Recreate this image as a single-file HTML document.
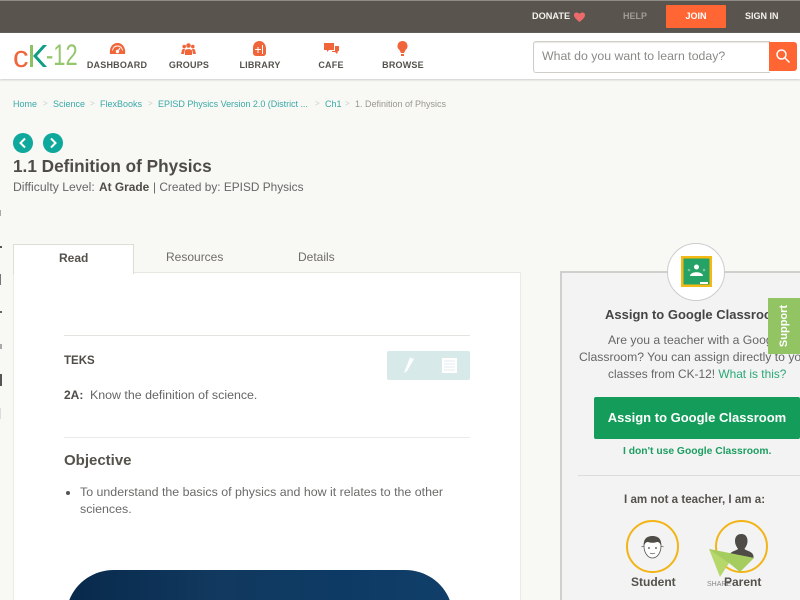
<!DOCTYPE html>
<html><head><meta charset="utf-8"><style>
html,body{margin:0;padding:0;width:800px;height:600px;overflow:hidden;background:#f8f8f4;font-family:"Liberation Sans",sans-serif;color:#555}
#w{position:relative;width:800px;height:600px;overflow:hidden;background:#f8f8f4}
.a{position:absolute;white-space:nowrap}
svg{position:absolute;overflow:visible}
.nav{font-size:9px;font-weight:bold;color:#55524c;letter-spacing:.2px;top:60px;text-align:center;width:80px}
.bc{font-size:9px;top:99px;color:#3aa9a8}
.sep{font-size:8px;top:99px;color:#ccc}
</style></head><body><div id="w">
<div class="a" style="left:0;top:0;width:800px;height:33px;background:#59554e;border-top:1px solid #8f8c86;box-sizing:border-box"></div>
<div class="a" style="left:0;top:33px;width:800px;height:46px;background:#fff;box-shadow:0 1px 2px #ccc"></div>

<div class="a" style="left:532px;top:11px;font-size:9.200px;font-weight:bold;color:#f4f2ee">DONATE</div>
<svg style="left:574px;top:12px" width="11" height="10" viewBox="0 0 11 10"><path d="M5.500 10C2 7 0 5.500 0 3 0 .5 3.500-.5 5.500 2 7.500-.5 11 .5 11 3c0 2.500-2 4-5.500 7z" fill="#ee6a6a"/></svg>
<div class="a" style="left:623px;top:11px;font-size:9px;font-weight:bold;color:#a09c94">HELP</div>
<div class="a" style="left:666px;top:5px;width:60px;height:23px;background:#ff6633;color:#fff;font-size:9px;font-weight:bold;text-align:center;line-height:23px;border-radius:1px">JOIN</div>
<div class="a" style="left:745px;top:11px;font-size:9px;font-weight:bold;color:#f4f2ee">SIGN IN</div>

<div class="a" style="left:13px;top:39px;font-size:31px;line-height:36px;color:#f0663a">c</div>
<svg style="left:28px;top:45px" width="20" height="23" viewBox="0 0 20 23"><path d="M2 0h3v22H2z" fill="#8cc265"/><path d="M15 0h4L9 11l10 11h-4L5 11z" fill="#0f9d85"/></svg>
<div class="a" style="left:46px;top:40px;font-size:30px;line-height:32px;color:#93c66d;transform-origin:0 50%;transform:scaleX(.73)">-12</div>

<svg style="left:110px;top:43px" width="15" height="11" viewBox="0 0 15 11"><path d="M0 11C-1 4 3 0 7.500 0S16 4 15 11z" fill="#f0663a"/><circle cx="7.500" cy="8.500" r="1.700" fill="#fff"/><path d="M2.500 7.500C3 4.500 5 3 7.500 3S12 4.500 12.500 7.500" stroke="#fff" fill="none" stroke-width=".9"/><path d="M8 8l2-3" stroke="#fff" stroke-width="1"/></svg>
<div class="a nav" style="left:77px">DASHBOARD</div>
<svg style="left:181px;top:43px" width="15" height="12" viewBox="0 0 15 12" fill="#f0663a"><circle cx="7.500" cy="2.500" r="2.300"/><circle cx="3.200" cy="3.500" r="1.800"/><circle cx="11.800" cy="3.500" r="1.800"/><path d="M4 12V8C4 5.500 11 5.500 11 8v4zM0 11l1-4c.5-1.500 2.500-1.500 3-1l-1 5zM15 11l-1-4c-.5-1.500-2.500-1.500-3-1l1 5z"/></svg>
<div class="a nav" style="left:149px">GROUPS</div>
<svg style="left:253px;top:41px" width="13" height="15" viewBox="0 0 13 15"><path d="M6.500 0C10.500 0 13 3.500 13 8v4c0 2-1.500 3-3 3H3c-1.500 0-3-1-3-3V7C0 3 2.500 0 6.500 0z" fill="#f0663a"/><path d="M2 8.500h6M5 6v6M9.500 4v9" stroke="#fff" stroke-width="1" fill="none"/></svg>
<div class="a nav" style="left:220px">LIBRARY</div>
<svg style="left:324px;top:43px" width="15" height="12" viewBox="0 0 15 12" fill="#f0663a"><path d="M0 0h10v7H5L3 9V7H0z"/><path d="M11 3h4v5h-1l-1 3-2-2H8V8h3z"/></svg>
<div class="a nav" style="left:291px">CAFE</div>
<svg style="left:397px;top:41px" width="11" height="15" viewBox="0 0 11 15" fill="#f0663a"><path d="M5.500 0a5 5 0 0 1 3 9L7 12H4L2.500 9a5 5 0 0 1 3-9z"/><path d="M4 13h3v2H4z"/></svg>
<div class="a nav" style="left:363px">BROWSE</div>

<div class="a" style="left:533px;top:41px;width:236px;height:30px;background:#fff;border:1px solid #cfcdc6;border-right:0;border-radius:3px 0 0 3px;box-shadow:inset 0 1px 1px #e8e8e4"></div>
<div class="a" style="left:542px;top:49px;font-size:12.300px;color:#8a8a86">What do you want to learn today?</div>
<div class="a" style="left:769px;top:42px;width:28px;height:29px;background:#ff6633;border-radius:0 3px 3px 0"></div>
<svg style="left:776px;top:49px" width="14" height="14" viewBox="0 0 14 14" fill="none" stroke="#fff" stroke-width="1.500"><circle cx="5.500" cy="5.500" r="4.500"/><path d="M9 9l4.500 4.500"/></svg>

<div class="a bc" style="left:13px">Home</div><div class="a sep" style="left:43px">&gt;</div>
<div class="a bc" style="left:53px">Science</div><div class="a sep" style="left:90px">&gt;</div>
<div class="a bc" style="left:100px">FlexBooks</div><div class="a sep" style="left:148px">&gt;</div>
<div class="a bc" style="left:158px;letter-spacing:-.03px">EPISD Physics Version 2.0 (District ...</div><div class="a sep" style="left:315px">&gt;</div>
<div class="a bc" style="left:325px">Ch1</div><div class="a sep" style="left:345px">&gt;</div>
<div class="a bc" style="left:355px;color:#99978f">1. Definition of Physics</div>

<svg style="left:13px;top:133px" width="21" height="21" viewBox="0 0 21 21"><circle cx="10" cy="10" r="10" fill="#0ea89c"/><path d="M12 5.500L7.500 10l4.500 4.500" fill="none" stroke="#fff" stroke-width="2"/></svg>
<svg style="left:43px;top:133px" width="21" height="21" viewBox="0 0 21 21"><circle cx="10" cy="10" r="10" fill="#0ea89c"/><path d="M8 5.500l4.500 4.500L8 14.500" fill="none" stroke="#fff" stroke-width="2"/></svg>
<div class="a" style="left:13px;top:156px;font-size:17.200px;line-height:20px;font-weight:bold;color:#4f4c47">1.1 Definition of Physics</div>
<div class="a" style="left:13px;top:180px;font-size:12.200px;line-height:15px;color:#666">Difficulty Level:</div>
<div class="a" style="left:99px;top:180px;font-size:11.900px;line-height:15px;font-weight:bold;color:#4f4c47">At Grade</div>
<div class="a" style="left:153px;top:180px;font-size:11.850px;line-height:15px;color:#666">| Created by: EPISD Physics</div>

<div class="a" style="left:0;top:210px;width:1px;height:6px;background:#aaa"></div>
<div class="a" style="left:0;top:246px;width:2px;height:2px;background:#555"></div>
<div class="a" style="left:0;top:274px;width:1px;height:11px;background:#777"></div>
<div class="a" style="left:0;top:311px;width:2px;height:2px;background:#666"></div>
<div class="a" style="left:0;top:344px;width:2px;height:5px;background:#aaa"></div>
<div class="a" style="left:0;top:374px;width:2px;height:12px;background:#555"></div>
<div class="a" style="left:0;top:408px;width:1px;height:11px;background:#ddd"></div>

<div class="a" style="left:13px;top:272px;width:508px;height:328px;background:#fff;border-left:1px solid #eceae5;border-right:1px solid #eceae5;border-top:1px solid #e8e6e1;box-sizing:border-box"></div>
<div class="a" style="left:13px;top:244px;width:121px;height:30px;background:#fff;border:1px solid #dedcd6;border-bottom:0;box-sizing:border-box"></div>
<div class="a" style="left:59px;top:251px;font-size:12px;line-height:15px;font-weight:bold;color:#55524c">Read</div>
<div class="a" style="left:166px;top:250px;font-size:12px;line-height:15px;color:#6f6d68">Resources</div>
<div class="a" style="left:298px;top:250px;font-size:12px;line-height:15px;color:#6f6d68">Details</div>

<div class="a" style="left:64px;top:335px;width:406px;height:1px;background:#e2e2de"></div>
<div class="a" style="left:64px;top:354px;font-size:11.500px;line-height:14px;font-weight:bold;color:#4f4c47">TEKS</div>
<div class="a" style="left:387px;top:351px;width:83px;height:29px;background:#d8e9ea;border-radius:2px"></div>
<svg style="left:402px;top:357px" width="13" height="18" viewBox="0 0 13 18"><path d="M8 .5L12 2 5 14l-3 2z" fill="#fff"/></svg>
<svg style="left:442px;top:358px" width="15" height="15" viewBox="0 0 15 15"><path d="M0 0h15v15H0z" fill="#fff"/><path d="M2 3h11M2 6h11M2 9h11M2 12h11" stroke="#d8e9ea" stroke-width=".7"/></svg>
<div class="a" style="left:64px;top:388px;font-size:12px;line-height:15px;font-weight:bold;color:#4f4c47">2A:</div>
<div class="a" style="left:90px;top:388px;font-size:12.400px;line-height:15px;color:#666">Know the definition of science.</div>
<div class="a" style="left:64px;top:437px;width:406px;height:1px;background:#eaeae6"></div>
<div class="a" style="left:64px;top:452px;font-size:15px;line-height:18px;font-weight:bold;color:#55524c">Objective</div>
<div class="a" style="left:66px;top:491px;width:4px;height:4px;border-radius:50%;background:#555"></div>
<div class="a" style="left:80px;top:484px;font-size:12.400px;line-height:17px;color:#6a6a66">To understand the basics of physics and how it relates to the other<br>sciences.</div>
<svg style="left:66px;top:570px;overflow:hidden" width="387" height="30" viewBox="0 0 387 30"><defs><linearGradient id="g" x1="0" y1="0" x2="1" y2="0"><stop offset="0" stop-color="#07294b"/><stop offset=".4" stop-color="#12395f"/><stop offset=".7" stop-color="#0d3a64"/><stop offset="1" stop-color="#103f69"/></linearGradient></defs><path d="M0 48C0 20 22 0 48 0H339C365 0 387 20 387 48V60H0z" fill="url(#g)"/></svg>

<div class="a" style="left:560px;top:271px;width:240px;height:329px;background:#f3f3f3;border:2px solid #cfcfcc;border-right:0;border-bottom:0;box-sizing:border-box"></div>
<div class="a" style="left:667px;top:243px;width:58px;height:58px;border-radius:50%;background:#fff;border:1px solid #ccc;box-sizing:border-box"></div>
<svg style="left:681px;top:256px" width="31" height="31" viewBox="0 0 31 31"><path d="M0 0h31v31H0z" fill="#f5b916"/><path d="M2.500 2.500h26v26h-26z" fill="#25a366"/><circle cx="15.500" cy="11" r="2.500" fill="#fff"/><path d="M9 20c0-5 13-5 13 0z" fill="#fff"/><circle cx="8" cy="14" r="1.300" fill="#7dc49d"/><circle cx="23" cy="14" r="1.300" fill="#7dc49d"/><path d="M19 26h8v2h-8z" fill="#fff"/></svg>
<div class="a" style="left:605px;top:307px;width:163px;overflow:hidden;font-size:13px;line-height:16px;font-weight:bold;color:#444">Assign to Google Classroom</div>
<div class="a" style="left:608px;top:332px;width:160px;overflow:hidden;font-size:12.200px;line-height:17px;color:#666">Are you a teacher with a Google</div>
<div class="a" style="left:579px;top:349px;width:221px;overflow:hidden;font-size:12.200px;line-height:17px;color:#666">Classroom? You can assign directly to your</div>
<div class="a" style="left:608px;top:366px;font-size:11.900px;line-height:17px;color:#666">classes from CK-12! <span style="color:#2aa876">What is this?</span></div>
<div class="a" style="left:768px;top:298px;width:32px;height:56px;background:#93c464"></div>
<div class="a" style="left:784px;top:326px;font-size:11px;font-weight:bold;color:#fff;transform:translate(-50%,-50%) rotate(-90deg)">Support</div>
<div class="a" style="left:594px;top:397px;width:206px;height:42px;background:#149c5a;border-radius:2px;color:#fff;font-size:13px;font-weight:bold;line-height:41px;text-align:center">Assign to Google Classroom</div>
<div class="a" style="left:623px;top:446px;font-size:10.300px;line-height:12px;font-weight:bold;color:#1c9e61">I don't use Google Classroom.</div>
<div class="a" style="left:578px;top:475px;width:222px;height:1px;background:#dcdcda"></div>
<div class="a" style="left:624px;top:493px;font-size:11.600px;line-height:14px;font-weight:bold;color:#55524c">I am not a teacher, I am a:</div>
<div class="a" style="left:626px;top:520px;width:53px;height:53px;border-radius:50%;border:2px solid #f2b416;box-sizing:border-box"></div>
<div class="a" style="left:715px;top:520px;width:53px;height:53px;border-radius:50%;border:2px solid #f2b416;box-sizing:border-box"></div>
<svg style="left:640px;top:535px" width="25" height="25" viewBox="0 0 25 25"><path d="M1.500 12c1-1 2-1 2.500 0M23.500 12c-1-1-2-1-2.500 0" stroke="#666" fill="none" stroke-width=".8"/><path d="M4 11c0-6 3-9 8.500-9S21 5 21 11c0 7-4 12-8.500 12S4 18 4 11z" fill="#fdfdfb" stroke="#555" stroke-width=".8"/><path d="M4 11C3 4 7 1 12.500 1S22 4 21 11c-1-3-2-4-4-4-3 1-6 1-9 0-2 0-3 1-4 4z" fill="#4f4c47"/><circle cx="9" cy="13" r=".9" fill="#444"/><circle cx="16" cy="13" r=".9" fill="#444"/><path d="M10 18q2.500 1.500 5 0" stroke="#555" fill="none" stroke-width=".7"/></svg>
<svg style="left:729px;top:534px" width="25" height="27" viewBox="0 0 25 27"><path d="M12.500 0c4 0 6 3 6 7s-2 6-3 8c2 2 8 2 9 7v2H0v-2c1-5 7-5 9-7-1-2-3-4-3-8s2-7 6.500-7z" fill="#4f4c47"/></svg>
<div class="a" style="left:631px;top:575px;font-size:12px;line-height:15px;font-weight:bold;color:#55524c">Student</div>
<div class="a" style="left:707px;top:581px;font-size:7px;line-height:8px;color:#888">SHARE</div>
<div class="a" style="left:724px;top:575px;font-size:12px;line-height:15px;font-weight:bold;color:#55524c">Parent</div>
<svg style="left:709px;top:549px" width="46" height="30" viewBox="0 0 46 30"><path d="M0 0L45 9 20 14 11 28z" fill="#b6d76a"/><path d="M0 0L45 9 31 23 20 14z" fill="#a5cc5e"/></svg>
</div></body></html>
